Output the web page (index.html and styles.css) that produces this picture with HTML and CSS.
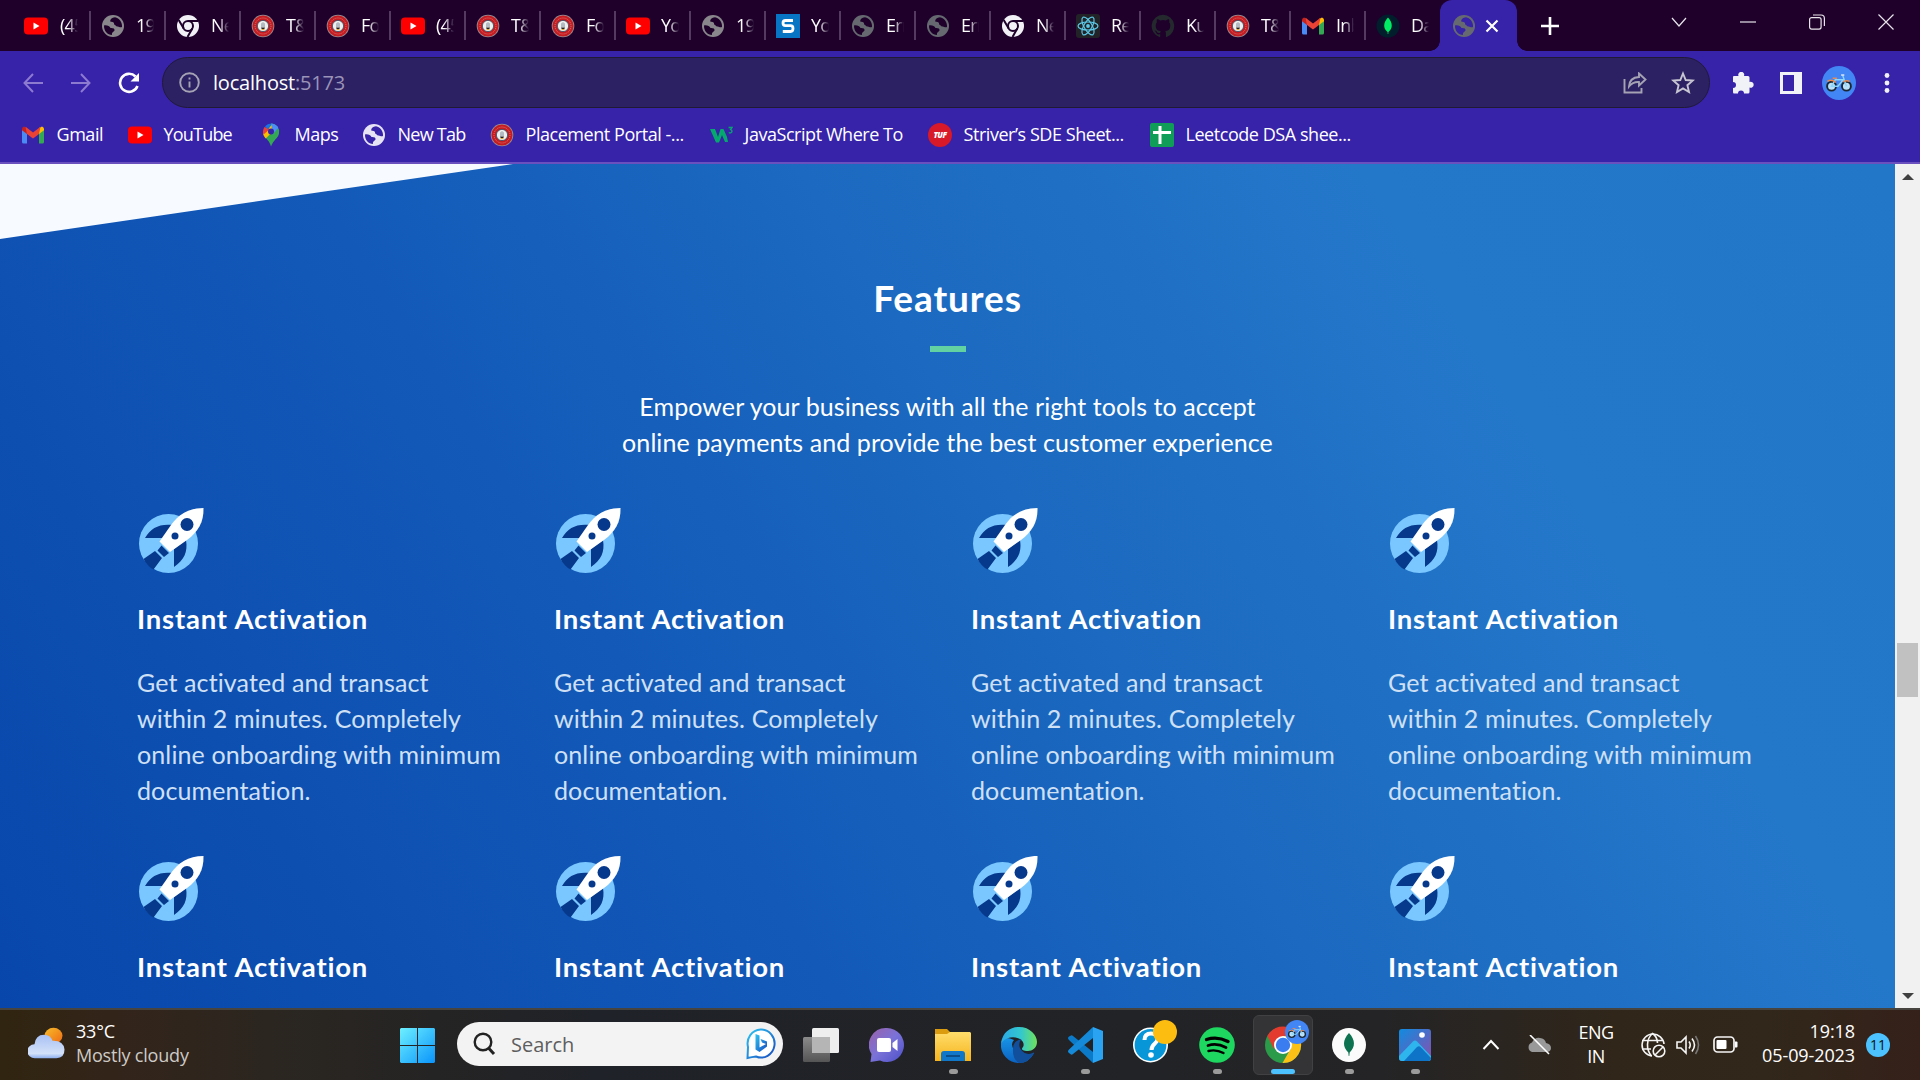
FILE: index.html
```html
<!DOCTYPE html>
<html lang="en">
<head>
<meta charset="utf-8">
<title>Features</title>
<link rel="stylesheet" href="styles.css">
</head>
<body>
<svg class="defs" aria-hidden="true">
  <defs>
    <linearGradient id="g-sun" x1="0" y1="0" x2="1" y2="1"><stop offset="0" stop-color="#f8bd2a"/><stop offset="1" stop-color="#ee6a14"/></linearGradient>
    <linearGradient id="g-cloud" x1="0" y1="0" x2="0" y2="1"><stop offset="0" stop-color="#a8c0f4"/><stop offset=".8" stop-color="#d3e1f8"/><stop offset="1" stop-color="#8fb0ee"/></linearGradient>
    <linearGradient id="g-win" x1="0" y1="0" x2="1" y2="1" gradientUnits="objectBoundingBox"><stop offset="0" stop-color="#6df0ff"/><stop offset="1" stop-color="#0a94fb"/></linearGradient>
    <linearGradient id="g-chat" x1="0" y1="0" x2="1" y2="1"><stop offset="0" stop-color="#9a62a8"/><stop offset=".5" stop-color="#7a72d8"/><stop offset="1" stop-color="#4d50c8"/></linearGradient>
    <linearGradient id="g-folder" x1="0" y1="0" x2="0" y2="1"><stop offset="0" stop-color="#ffdd6b"/><stop offset="1" stop-color="#f6b51e"/></linearGradient>
    <linearGradient id="g-edge" x1="0" y1="0" x2="1" y2="0"><stop offset="0" stop-color="#2aa9e6"/><stop offset=".55" stop-color="#33c7cf"/><stop offset="1" stop-color="#6fe25a"/></linearGradient>
    <linearGradient id="g-edge2" x1="0" y1="0" x2="0" y2="1"><stop offset="0" stop-color="#1893e6"/><stop offset="1" stop-color="#0b62c0"/></linearGradient>
    <linearGradient id="g-photo" x1="0" y1="0" x2="1" y2="1"><stop offset="0" stop-color="#0f8ce0"/><stop offset="1" stop-color="#8a4fae"/></linearGradient>
    <linearGradient id="g-bing" x1="0" y1="0" x2="1" y2="1"><stop offset="0" stop-color="#2ec5f2"/><stop offset="1" stop-color="#164bc0"/></linearGradient>
    <linearGradient id="g-view" x1="0" y1="0" x2="0" y2="1"><stop offset="0" stop-color="#8a8a8a"/><stop offset="1" stop-color="#555"/></linearGradient>
  </defs>
  <symbol id="youtube" viewBox="0 0 24 24"><rect y="3.500" width="24" height="17" rx="4" fill="#f00"/><path d="M9.500 8.500v7l6-3.500z" fill="#fff"/></symbol>
  <symbol id="globe" viewBox="0 0 24 24"><circle cx="12" cy="12" r="11" fill="currentColor"/><path class="land" d="M14 3.200c-3 .3-5.500 2.300-4.500 4.600 2.500-.3 4 .7 3.500 2.700 1.500 0 1.500 2 3.500 2s2.500 1.500 4.500.500C21.500 8.500 18.500 4 14 3.200zM3 11.500c3-.5 5.500.5 6.500 2.500 2.500-.2 4.500.5 4 2.500-.8 1.500-3 1.500-2.500 4.500C6.500 21 2.800 17 3 11.500z"/></symbol>
  <symbol id="chromium" viewBox="0 0 24 24"><circle cx="12" cy="12" r="11" fill="#f1f1f6"/><circle cx="12" cy="12" r="5" fill="none" stroke="#1e002b" stroke-width="2"/><path d="M12 7h10M7.700 14.500L2.700 6M16.300 14.500L11.500 23" stroke="#1e002b" stroke-width="2"/></symbol>
  <symbol id="seal" viewBox="0 0 24 24"><circle cx="12" cy="12" r="11.300" fill="#9a8f95"/><circle cx="12" cy="12" r="10.500" fill="#c51c22"/><circle cx="12" cy="12" r="8" fill="none" stroke="#de7a75" stroke-width="1" stroke-dasharray="1 1"/><circle cx="12" cy="12" r="5.600" fill="#eef0ee" stroke="#31516a" stroke-width=".8"/><path d="M10 13V9.500l2-1.500 2 1.500V13z" fill="#b4bac2"/><path d="M10 13.500h4l-.7 1.500h-2.600z" fill="#251d1d"/><path d="M10 15h4l-2 1.500z" fill="#e4a52a"/></symbol>
  <symbol id="sq-s" viewBox="0 0 24 24"><rect width="24" height="24" fill="#0874c4"/><path d="M17 6.500H9.500Q7 6.500 7 9t2.500 2.700h5Q17 11.700 17 14.500t-2.500 3H6.800" fill="none" stroke="#fff" stroke-width="2.800"/></symbol>
  <symbol id="react" viewBox="0 0 24 24"><rect width="24" height="24" rx="3" fill="#222326"/><g fill="none" stroke="#5cc9e8" stroke-width="1.200"><ellipse cx="12" cy="12" rx="10" ry="4"/><ellipse cx="12" cy="12" rx="10" ry="4" transform="rotate(60 12 12)"/><ellipse cx="12" cy="12" rx="10" ry="4" transform="rotate(120 12 12)"/></g><circle cx="12" cy="12" r="1.900" fill="#5cc9e8"/></symbol>
  <symbol id="github" viewBox="0 0 24 24"><path fill="#24292e" d="M12 .8A11.400 11.400 0 0 0 8.400 23c.6.100.8-.2.800-.5v-2.200c-3.200.7-3.900-1.400-3.900-1.400-.5-1.300-1.300-1.700-1.300-1.700-1-.7.100-.7.100-.7 1.200.1 1.800 1.200 1.800 1.200 1 1.800 2.700 1.300 3.300 1 .1-.8.400-1.300.7-1.600-2.500-.3-5.200-1.300-5.200-5.700 0-1.200.4-2.300 1.200-3.100-.1-.3-.5-1.500.1-3 0 0 1-.3 3.200 1.100a11 11 0 0 1 5.700 0c2.200-1.500 3.100-1.100 3.100-1.100.7 1.500.3 2.700.2 3 .7.800 1.100 1.800 1.100 3.100 0 4.400-2.700 5.400-5.200 5.700.4.300.8 1 .8 2.100v3.200c0 .3.200.7.800.5A11.400 11.400 0 0 0 12 .8z"/></symbol>
  <symbol id="gmail" viewBox="0 0 24 24"><path d="M1 6v13q0 1.500 1.500 1.500H6V10z" fill="#4a8af4"/><path d="M23 6v13q0 1.500-1.500 1.500H18V10z" fill="#34a853"/><path d="M18 5v6l5-3.700V6q0-2-2-2.500z" fill="#fbbc04"/><path d="M1 7.300V6q0-2 2-2.500L6 5v6z" fill="#c5221f"/><path d="M4.500 3.700L12 9.500l7.500-5.800L18 11l-6 4.500L6 11z" fill="#ea4335"/></symbol>
  <symbol id="leaf-dark" viewBox="0 0 24 24"><circle cx="12" cy="12" r="11.500" fill="#001e2b"/><path d="M12 3.500c5 5.500 5 11 .4 14.500l-.1 2h-.6l-.1-2C7 14.500 7 9 12 3.500z" fill="#00ed64"/></symbol>
  <symbol id="maps" viewBox="0 0 24 24"><path d="M12 .5a8.200 8.200 0 0 1 8 10c-1 5-5.500 6-8 13-1.500-5-3.500-6.500-5.500-9z" fill="#34a853"/><path d="M4 10.500c.4 2 1.500 3.600 2.800 5L18 4 14 1z" fill="#fbbc04"/><path d="M5.500 4Q3 8 4.500 11.500L11 6z" fill="#ea4335"/><path d="M6 3.300Q9 .2 13 .6l-4 6z" fill="#1a73e8"/><path d="M12.500.500Q17.500 1 19.300 5L13 12z" fill="#4c8df6"/><circle cx="12" cy="8.500" r="3" fill="#3722aa"/></symbol>
  <symbol id="w3" viewBox="0 0 24 24"><path d="M1 6h5l3 8 2.500-8h3L18 14l1 5h-3l-3-7-3 7.500H7z" fill="#04aa6d"/><path d="M19.500 4.500H23l-1.500 2.200q2 .5 1.200 2.500-1 1.300-3 .3" fill="none" stroke="#04aa6d" stroke-width="1.300"/></symbol>
  <symbol id="tuf" viewBox="0 0 24 24"><circle cx="12" cy="12" r="12" fill="#d71929"/><text x="12" y="15" text-anchor="middle" class="tuf-label">TUF</text></symbol>
  <symbol id="sheet" viewBox="0 0 24 24"><rect width="24" height="24" rx="2" fill="#109d58"/><path d="M10 3v18M3 9.500h18" stroke="#fff" stroke-width="3"/></symbol>
  <symbol id="bike" viewBox="0 0 32 32"><circle cx="16" cy="16" r="16" fill="#4285f4"/><g fill="#b9e2fa" stroke="#1b2733" stroke-width="1.800"><circle cx="9" cy="19" r="4.200"/><circle cx="23" cy="19" r="4.200"/></g><path d="M9 19l3.500-6h7.500l-5 6zM19.500 9l3.500 10" fill="none" stroke="#8bd6fa" stroke-width="1.300"/><path d="M10 11.500h4M5 14.500q4-2.500 8 1M20 15q3-2 6-.5" fill="none" stroke="#e98a50" stroke-width="1.300"/><path d="M18 8.500h3" stroke="#eee" stroke-width="1.300"/></symbol>
  <symbol id="rocket" viewBox="0 0 66 66"><circle cx="30.500" cy="35.500" r="29.500" fill="#7ac7ff"/><path d="M7 30C13 20 21 15.500 35 17L25 30zM48 32c2 12-2 20-12 27V41z" fill="#06388c"/><path d="M19.500 42.500l4-5 7.500 7.500-5 4zM17 43l7 7-8.500 11.500Q9 58 5.500 51z" fill="#06388c"/><path d="M65.500 0C50 0 40 7 33 17L21.500 33.500 32 44l17-12C60 24 66 14 65.500 0z" fill="#fff"/><circle cx="49" cy="16.500" r="6.500" fill="#06388c"/><circle cx="37" cy="28" r="3.500" fill="#06388c"/></symbol>
</svg>

<header class="browser">
  <div class="tabstrip">
    <div class="tabs">
      <div class="tab"><svg><use href="#youtube"/></svg><span>(45)</span></div>
      <div class="tab"><svg class="gray"><use href="#globe"/></svg><span>192</span></div>
      <div class="tab"><svg><use href="#chromium"/></svg><span>New</span></div>
      <div class="tab"><svg><use href="#seal"/></svg><span>T&amp;P</span></div>
      <div class="tab"><svg><use href="#seal"/></svg><span>For</span></div>
      <div class="tab"><svg><use href="#youtube"/></svg><span>(45)</span></div>
      <div class="tab"><svg><use href="#seal"/></svg><span>T&amp;P</span></div>
      <div class="tab"><svg><use href="#seal"/></svg><span>For</span></div>
      <div class="tab"><svg><use href="#youtube"/></svg><span>You</span></div>
      <div class="tab"><svg class="gray"><use href="#globe"/></svg><span>192</span></div>
      <div class="tab"><svg><use href="#sq-s"/></svg><span>You</span></div>
      <div class="tab"><svg class="dim"><use href="#globe"/></svg><span>Err</span></div>
      <div class="tab"><svg class="dim"><use href="#globe"/></svg><span>Err</span></div>
      <div class="tab"><svg><use href="#chromium"/></svg><span>New</span></div>
      <div class="tab"><svg><use href="#react"/></svg><span>Rea</span></div>
      <div class="tab"><svg><use href="#github"/></svg><span>Kus</span></div>
      <div class="tab"><svg><use href="#seal"/></svg><span>T&amp;P</span></div>
      <div class="tab"><svg><use href="#gmail"/></svg><span>Inb</span></div>
      <div class="tab last"><svg><use href="#leaf-dark"/></svg><span>Dat</span></div>
    </div>
    <div class="tab-active">
      <svg class="dim on-bar" width="24" height="24"><use href="#globe"/></svg>
      <svg width="14" height="14" viewBox="0 0 14 14"><path d="M1.500 1.500l11 11M12.500 1.500l-11 11" stroke="#fff" stroke-width="2.200"/></svg>
    </div>
    <svg class="newtab" width="20" height="20" viewBox="0 0 20 20"><path d="M10 1v18M1 10h18" stroke="#fff" stroke-width="2.600"/></svg>
    <div class="wincontrols">
      <svg viewBox="0 0 16 16"><path d="M1 4l7 8 7-8"/></svg>
      <svg viewBox="0 0 16 16"><path d="M0 8h16"/></svg>
      <svg viewBox="0 0 16 16"><rect x=".6" y="3.600" width="11.500" height="11.500" rx="2"/><path d="M4 1h8q3.400 0 3.400 3.400V12"/></svg>
      <svg viewBox="0 0 16 16"><path d="M.5.500l15 15M15.500.500l-15 15"/></svg>
    </div>
  </div>

  <div class="toolbar">
    <div class="nav">
      <svg width="20" height="20" viewBox="0 0 20 20" class="faded"><path d="M20 10H2M10 1L1.500 10l8.500 9"/></svg>
      <svg width="20" height="20" viewBox="0 0 20 20" class="faded"><path d="M0 10h18M10 1l8.500 9-8.500 9"/></svg>
      <svg width="22" height="22" viewBox="0 0 22 22" class="bright"><path d="M19.500 14a9 9 0 1 1-2-9.500"/><path d="M21 1v8.500h-8.500z" class="fill"/></svg>
    </div>
    <div class="omnibox">
      <svg width="21" height="21" viewBox="0 0 21 21"><circle cx="10.500" cy="10.500" r="9.300"/><path d="M10.500 9.500v6M10.500 5.500v2"/></svg>
      <span class="url">localhost<i>:5173</i></span>
      <svg width="24" height="22" viewBox="0 0 24 22" class="share"><path d="M1.500 7v13.500h17V16"/><path d="M16 1.500l6.500 6-6.500 6V10q-6-.5-10 4.500.5-9 10-9.500z"/></svg>
      <svg width="24" height="24" viewBox="0 0 24 24"><path d="M12 2.500l2.700 6.500 7 .6-5.300 4.600 1.600 6.900-6-3.700-6 3.700 1.600-6.900L2.300 9.600l7-.6z"/></svg>
    </div>
    <div class="actions">
      <svg width="22" height="22" viewBox="0 0 22 22"><path fill="#f1f1f8" d="M1 5q0-1 1-1h4.500a3 3 0 1 1 5.500 0H16q1.500 0 1.500 1.500V10a3 3 0 1 1 0 5.500V20q0 1.500-1.500 1.500h-4a3 3 0 0 0-6 0H2q-1 0-1-1.500v-4a3 3 0 0 0 0-6z"/></svg>
      <svg width="22" height="22" viewBox="0 0 22 22"><path fill="#f1f1f8" fill-rule="evenodd" d="M0 0h22v22H0zM3 3v16h11V3z"/></svg>
      <svg width="34" height="34"><use href="#bike"/></svg>
      <svg width="6" height="20" viewBox="0 0 6 20"><g fill="#f1f1f8"><circle cx="3" cy="2.500" r="2.400"/><circle cx="3" cy="10" r="2.400"/><circle cx="3" cy="17.500" r="2.400"/></g></svg>
    </div>
  </div>

  <nav class="bookmarks">
    <div><svg><use href="#gmail"/></svg><span>Gmail</span></div>
    <div><svg><use href="#youtube"/></svg><span>YouTube</span></div>
    <div><svg><use href="#maps"/></svg><span>Maps</span></div>
    <div><svg class="light on-bar"><use href="#globe"/></svg><span>New Tab</span></div>
    <div><svg><use href="#seal"/></svg><span>Placement Portal -...</span></div>
    <div><svg><use href="#w3"/></svg><span>JavaScript Where To</span></div>
    <div><svg><use href="#tuf"/></svg><span>Striver’s SDE Sheet...</span></div>
    <div><svg><use href="#sheet"/></svg><span>Leetcode DSA shee...</span></div>
  </nav>
</header>

<div class="viewport">
  <main class="features">
    <div class="wedge"></div>
    <h1>Features</h1>
    <div class="rule"></div>
    <p class="lead">Empower your business with all the right tools to accept<br>online payments and provide the best customer experience</p>
    <section class="grid">
      <article><svg><use href="#rocket"/></svg><h2>Instant Activation</h2><p>Get activated and transact<br>within 2 minutes. Completely<br>online onboarding with minimum<br>documentation.</p></article>
      <article><svg><use href="#rocket"/></svg><h2>Instant Activation</h2><p>Get activated and transact<br>within 2 minutes. Completely<br>online onboarding with minimum<br>documentation.</p></article>
      <article><svg><use href="#rocket"/></svg><h2>Instant Activation</h2><p>Get activated and transact<br>within 2 minutes. Completely<br>online onboarding with minimum<br>documentation.</p></article>
      <article><svg><use href="#rocket"/></svg><h2>Instant Activation</h2><p>Get activated and transact<br>within 2 minutes. Completely<br>online onboarding with minimum<br>documentation.</p></article>
      <article><svg><use href="#rocket"/></svg><h2>Instant Activation</h2></article>
      <article><svg><use href="#rocket"/></svg><h2>Instant Activation</h2></article>
      <article><svg><use href="#rocket"/></svg><h2>Instant Activation</h2></article>
      <article><svg><use href="#rocket"/></svg><h2>Instant Activation</h2></article>
    </section>
  </main>
  <div class="scrollbar">
    <svg width="12" height="6" viewBox="0 0 12 6"><path d="M6 0l6 6H0z" fill="#404040"/></svg>
    <div class="thumb"></div>
    <svg width="12" height="6" viewBox="0 0 12 6"><path d="M0 0h12L6 6z" fill="#404040"/></svg>
  </div>
</div>

<footer class="taskbar">
  <div class="weather">
    <svg width="37" height="37" viewBox="0 0 37 37" preserveAspectRatio="none"><circle cx="25.500" cy="10" r="9" fill="url(#g-sun)"/><path d="M7 36a7.500 8 0 0 1-.5-16Q7.500 9 16 9q6.500 0 8.500 7 11-.5 12 10 0 10-8 10z" fill="url(#g-cloud)"/></svg>
    <div><div class="temp">33°C</div><div class="cond">Mostly cloudy</div></div>
  </div>
  <div class="start"><svg width="35" height="35" viewBox="0 0 35 35"><path d="M1 0h16v17H0V1zM18 0h16l1 1v16H18zM0 18h17v17H1l-1-1zM18 18h17v16l-1 1H18z" fill="url(#g-win)"/></svg></div>
  <div class="search">
    <svg width="24" height="24" viewBox="0 0 24 24"><circle cx="11" cy="10" r="8.300" fill="none" stroke="#222" stroke-width="2.400"/><path d="M16.500 16l5.500 6" stroke="#222" stroke-width="3"/></svg>
    <span>Search</span>
    <svg width="30" height="32" viewBox="0 0 30 32"><path d="M1.500 30l.500-11A13.500 14 0 1 1 10 28.500q-4 .500-8.500 1.500z" fill="#fff" stroke="url(#g-bing)" stroke-width="2"/><path d="M9.500 6l4 1.500v12l6.500-3.500-4-1.500-1.500-3.500 6.500 2.500v5L13.500 24l-4-2.500z" fill="url(#g-bing)"/></svg>
  </div>
  <div class="apps">
    <div class="app"><svg viewBox="0 0 36 36"><rect y="10" width="27" height="25" rx="1.500" fill="url(#g-view)"/><rect x="9" y="1" width="27" height="25" rx="1.500" fill="#eee"/><path d="M9 10h18v16H10l-1-1z" fill="#b5b5b5"/></svg></div>
    <div class="app"><svg viewBox="0 0 36 36"><path d="M18 1a17 17 0 1 1-7 32.500L1.500 35l1-8A17 17 0 0 1 18 1z" fill="url(#g-chat)"/><rect x="8" y="11" width="14" height="14" rx="2" fill="#fff"/><path d="M23.500 16l5-4v12l-5-4z" fill="#fff"/></svg></div>
    <div class="app run"><svg viewBox="0 0 36 36"><path d="M0 2h12l3 3v4H0z" fill="#dc9c10"/><path d="M0 7h12l3-2h20l1 1v28H0z" fill="url(#g-folder)"/><path d="M6 34V27q0-3 3-3h18q3 0 3 3v7z" fill="#1177c8"/><path d="M11 29h14" stroke="#0b4d88" stroke-width="2"/></svg></div>
    <div class="app"><svg viewBox="0 0 36 36"><path d="M0 16Q2 8 13 13q-4 4 0 10 5 8 13 6 4-1 7-3-5 10-15 10A18 18 0 0 1 0 16z" fill="url(#g-edge2)"/><path d="M0 16C2 5 9 0 18 0c11 0 18 8 18 15 0 6-5 9-9 9-5 0-6-1-6-2.500 1-2 2-2 1.500-5C21.500 11 9 6 0 16z" fill="url(#g-edge)"/><path d="M12.500 18q2-5 8-6-4 5-1 10 5 7 12 4 2-1 1.500.5Q27 36 18 36q-8-5-5.500-18z" fill="#114f9c"/></svg></div>
    <div class="app run"><svg viewBox="0 0 36 36"><path d="M26 0v36L2 13q-2-2 0-3.500l2-1q1-.5 2 .5L26 25z" fill="#0b7ac8"/><path d="M26 0L2 22.500q-2 2 0 3.500l2 1.500q1 .5 2-.5L26 11z" fill="#158ad8"/><path d="M26 0l10 4v28l-10 4z" fill="#2aa4f2"/></svg></div>
    <div class="app"><svg viewBox="0 0 36 36" overflow="visible"><circle cx="17.500" cy="18" r="16.700" fill="#0796d8" stroke="#fff" stroke-width="1.600"/><path d="M11.500 13q0-6.500 6.500-6.500t6.500 5.500c0 5-6 4-6 11" fill="none" stroke="#fff" stroke-width="4"/><circle cx="18" cy="28" r="2.800" fill="#fff"/><circle cx="32" cy="5" r="12" fill="#fdbd10"/></svg></div>
    <div class="app run"><svg viewBox="0 0 36 36"><circle cx="18" cy="18" r="17.800" fill="#1ed760"/><g fill="none" stroke="#000" stroke-linecap="round"><path d="M7.500 12.500q11-3.500 21.500 2" stroke-width="3.400"/><path d="M9 18.500q9-2.800 18 2" stroke-width="2.800"/><path d="M9.500 24q7.500-2 15 2" stroke-width="2.400"/></g></svg></div>
    <div class="app active"><svg viewBox="0 0 36 36" overflow="visible"><circle cx="18" cy="18" r="18" fill="#2b9b49"/><path d="M2.400 9A18 18 0 0 1 34 9H18L9 22z" fill="#e33b2e"/><path d="M18 9h15.600A18 18 0 0 1 17.500 36l8-14z" fill="#fbc116"/><circle cx="18" cy="18" r="9" fill="#fff"/><circle cx="18" cy="18" r="7.200" fill="#3a7df0"/></svg><svg class="profile"><use href="#bike"/></svg></div>
    <div class="app run"><svg viewBox="0 0 36 36"><circle cx="18" cy="18" r="17" fill="#fbfbfb"/><path d="M18 6c6.500 7 6.500 14 .7 19.500L18.300 29h-.6l-.4-3.500C11.500 20 11.500 13 18 6z" fill="#0c7250"/></svg></div>
    <div class="app run"><svg viewBox="0 0 36 36"><rect x="2" y="2" width="32" height="32" rx="3" fill="url(#g-photo)"/><path d="M2 29L16 14.500q2-2 4 0L34 29v2q0 3-3 3H5q-3 0-3-3z" fill="#2fb5ee"/><path d="M7 34l13-14q2-1.500 3.500 0L34 31q0 3-3 3z" fill="#0e74c8"/><circle cx="25" cy="8" r="2.800" fill="#fff"/></svg></div>
  </div>
  <div class="tray">
    <svg class="chev" width="18" height="12" viewBox="0 0 18 12"><path d="M1.500 10L9 2l7.500 8" fill="none" stroke="#fff" stroke-width="2"/></svg>
    <svg class="onedrive" width="26" height="20" viewBox="0 0 26 20"><path d="M6 17a5 5 0 0 1 0-9.500Q9 2 14 3q5 .500 6 5 5 1 5 5t-5 4z" fill="#999"/><path d="M4 0l19 19" stroke="#fff" stroke-width="1.600"/></svg>
    <div class="lang">ENG<br>IN</div>
    <svg class="net" width="26" height="26" viewBox="0 0 26 26" fill="none" stroke="#f5f5f5" stroke-width="1.600"><path d="M12 24A11 11 0 1 1 24 12"/><path d="M11.500 24C6 18 6 7 12.500 1.500 16 4 17.500 8 17.500 11M2 8.500h21M2 17h9"/><circle cx="19" cy="19" r="5.800"/><path d="M15 23l8-8"/></svg>
    <svg class="vol" width="24" height="22" viewBox="0 0 24 22" fill="none" stroke="#f5f5f5" stroke-width="1.600"><path d="M1 8h4l5-5v16l-5-5H1z"/><path d="M13 7.500q2.500 3.500 0 7M16 4.500q5 6.500 0 13"/><path d="M19.500 2q6 9 0 18" stroke="#777"/></svg>
    <svg class="bat" width="25" height="17" viewBox="0 0 25 17"><rect x="1" y="1" width="20" height="15" rx="3.500" fill="none" stroke="#f5f5f5" stroke-width="1.700"/><rect x="3.500" y="4" width="10" height="9" rx="1" fill="#fff"/><path d="M22 5.500h1.500q1 0 1 1v4q0 1-1 1H22z" fill="#fff"/></svg>
    <div class="clock"><div class="time">19:18</div><div class="date">05-09-2023</div></div>
    <div class="count">11</div>
  </div>
</footer>
</body>
</html>
```
FILE: styles.css
```css
* { box-sizing: border-box; }
body {
  margin: 0;
  width: 1920px;
  height: 1080px;
  overflow: hidden;
  display: flex;
  flex-direction: column;
  font-family: "Open Sans", "Noto Sans", sans-serif;
  color: #fff;
  white-space: nowrap;
}
svg { display: block; flex: none; }
.defs { position: absolute; width: 0; height: 0; }
.land { fill: var(--land, #1e002b); }
.tuf-label { font: italic 900 8px "Open Sans", sans-serif; fill: #fff; }

/* Browser frame */
.browser { height: 164px; background: #3722aa; border-bottom: 2px solid #6a4fbe; display: flex; flex-direction: column; flex: none; }
.tabstrip { height: 51px; background: #1e002b; display: flex; align-items: center; }
.tabs { display: flex; padding-left: 16px; width: 1440px; flex: none; }
.tab { flex: none; width: 75px; height: 29px; display: flex; align-items: center; padding-left: 10px; gap: 11px; border-right: 2px solid #533a5e; }
.tab:first-child { padding-left: 8px; gap: 12px; }
.tab.last { width: 74px; border-right-color: transparent; }
.tab svg { width: 24px; height: 24px; }
.tab span { width: 18px; overflow: hidden; font-size: 18px; line-height: 26px; padding-bottom: 1px; letter-spacing: -0.8px; -webkit-mask-image: linear-gradient(90deg, #000 45%, transparent); mask-image: linear-gradient(90deg, #000 45%, transparent); }
.gray { color: #89878c; }
.dim { color: #666a70; }
.light { color: #e6e4f4; }
.on-bar { --land: #3722aa; }
.tab-active { position: relative; flex: none; width: 77px; height: 51px; background: #3722aa; border-radius: 12px 12px 0 0; display: flex; align-items: center; padding-left: 12px; gap: 9px; }
.tab-active::before, .tab-active::after { content: ""; position: absolute; bottom: 0; width: 10px; height: 10px; }
.tab-active::before { left: -10px; background: radial-gradient(circle at 0 0, transparent 9.500px, #3722aa 10px); }
.tab-active::after { right: -10px; background: radial-gradient(circle at 100% 0, transparent 9.500px, #3722aa 10px); }
.newtab { margin-left: 23px; }
.wincontrols { margin-left: auto; margin-right: 26px; padding-bottom: 8px; display: flex; gap: 53px; }
.wincontrols svg { width: 16px; height: 16px; fill: none; stroke: #e8e4ea; stroke-width: 1.200; }

.toolbar { height: 63px; display: flex; align-items: center; }
.nav { width: 162px; padding-left: 23px; display: flex; align-items: center; gap: 28px; }
.nav svg { fill: none; stroke-width: 2; }
.nav .faded { stroke: #8d7bd0; }
.nav .bright { stroke: #fff; stroke-width: 2.600; margin-left: -1px; }
.nav .fill { fill: #fff; stroke: none; }
.omnibox { width: 1548px; height: 51px; border-radius: 26px; background: #2c2163; border: 1px solid #211a35; display: flex; align-items: center; padding: 0 14px 0 16px; }
.omnibox svg { fill: none; stroke: #a5a2b4; stroke-width: 1.900; }
.url { flex: 1; margin-left: 13px; font-size: 20px; letter-spacing: -0.2px; }
.url i { font-style: normal; color: #9a94b8; }
.share { margin-right: 24px; }
.omnibox svg:last-child { stroke: #c8c5d2; }
.actions { display: flex; align-items: center; padding-left: 22px; }
.actions svg:nth-child(2) { margin-left: 26px; }
.actions svg:nth-child(3) { margin-left: 20px; }
.actions svg:nth-child(4) { margin-left: 28px; }

.bookmarks { height: 42px; display: grid; align-items: center; grid-template-columns: 107px 131px 103px 128px 219px 219px 222px 220px; padding-left: 21px; padding-bottom: 1px; font-size: 18px; letter-spacing: -0.45px; }
.bookmarks div { display: flex; align-items: center; gap: 11.500px; }
.bookmarks div:nth-child(2) { letter-spacing: -0.8px; }
.bookmarks div:nth-child(4) { letter-spacing: -0.75px; }
.bookmarks span { padding-bottom: 1px; }
.bookmarks svg { width: 24px; height: 24px; }

/* Page */
.viewport { height: 844px; flex: none; display: flex; overflow: hidden; }
.features { position: relative; width: 1895px; height: 844px; overflow: hidden; font-family: Lato, sans-serif; background: linear-gradient(57deg, #0846ab 0%, #1258b7 32%, #1b69c0 55%, #2478ca 78%, #2377c9 100%); }
.wedge { position: absolute; left: 0; top: 0; width: 513px; height: 75px; background: #f7fbff; clip-path: polygon(0 0, 100% 0, 0 100%); }
h1 { margin: 0; padding-top: 110px; font-size: 37px; line-height: 48px; text-align: center; letter-spacing: 0.9px; }
.rule { width: 36px; height: 6px; margin: 24px auto 0; background: #62d2a2; }
.lead { margin: 36px 0 0; font-size: 25px; line-height: 36px; text-align: center; letter-spacing: 0.08px; }
.grid { display: grid; grid-template-columns: repeat(4, 417px); grid-template-rows: 348px auto; padding: 48px 0 0 138px; }
article svg { width: 66px; height: 66px; }
h2 { margin: 24px 0 0 -1px; font-size: 27.500px; line-height: 42px; letter-spacing: 0.8px; }
article p { margin: 24px 0 0 -1px; font-size: 25px; line-height: 36px; color: #cfe0f5; letter-spacing: 0.12px; }
.scrollbar { width: 25px; background: #f1f1f1; display: flex; flex-direction: column; align-items: center; padding: 10px 0 9px; }
.thumb { width: 21px; height: 54px; margin: 463px 0 auto; background: #c1c1c1; }

/* Taskbar */
.taskbar { height: 72px; flex: none; border-top: 2px solid #47443f; display: flex; align-items: center; background: linear-gradient(90deg, #302510 0, #33241a 6%, #2b2620 14%, #1f2228 31%, #222326 60%, #242426 72%, #30261a 84%, #31271a 92%, #35211a 100%); }
.weather { flex: none; width: 400px; padding-left: 28px; padding-bottom: 4px; display: flex; align-items: center; gap: 11px; font-size: 18px; line-height: 24px; letter-spacing: -0.2px; }
.weather svg { height: 32px; }
.cond { color: #cdcac6; }
.start { flex: none; width: 57px; }
.search { flex: none; width: 326px; height: 44px; margin-bottom: 2px; border-radius: 22px; background: #f3f3f3; display: flex; align-items: center; padding: 0 7px 0 15px; color: #5e5e5e; font-size: 20px; }
.search span { flex: 1; margin-left: 15px; }
.apps { flex: none; display: flex; margin-left: 8px; gap: 6px; }
.app { position: relative; width: 60px; height: 60px; border-radius: 6px; display: flex; align-items: center; justify-content: center; }
.app svg { width: 36px; height: 36px; margin-bottom: 1px; }
.app.run::after, .app.active::after { content: ""; position: absolute; bottom: 1px; width: 9px; height: 5px; border-radius: 3px; background: #9b9b9b; }
.app.active { background: #343436; border: 1px solid #414143; }
.app.active::after { bottom: 0; width: 24px; background: #4cc2ff; }
.app .profile { position: absolute; right: 3px; top: 4px; width: 24px; height: 24px; }
.tray { flex: 1; display: flex; align-items: center; padding-bottom: 1px; font-size: 18px; line-height: 24px; }
.chev { margin-left: 37px; }
.onedrive { margin-left: 26px; }
.lang { width: 60px; margin-left: 14px; padding-bottom: 2px; text-align: center; letter-spacing: -0.5px; }
.net { margin-left: 14px; }
.vol { margin-left: 10px; }
.bat { margin-left: 13px; }
.clock { width: 117px; padding-bottom: 3px; text-align: right; letter-spacing: -0.1px; }
.count { width: 24px; height: 24px; margin-left: 11px; border-radius: 50%; background: #4cc2ff; color: #111; font-size: 14px; text-align: center; }
```
